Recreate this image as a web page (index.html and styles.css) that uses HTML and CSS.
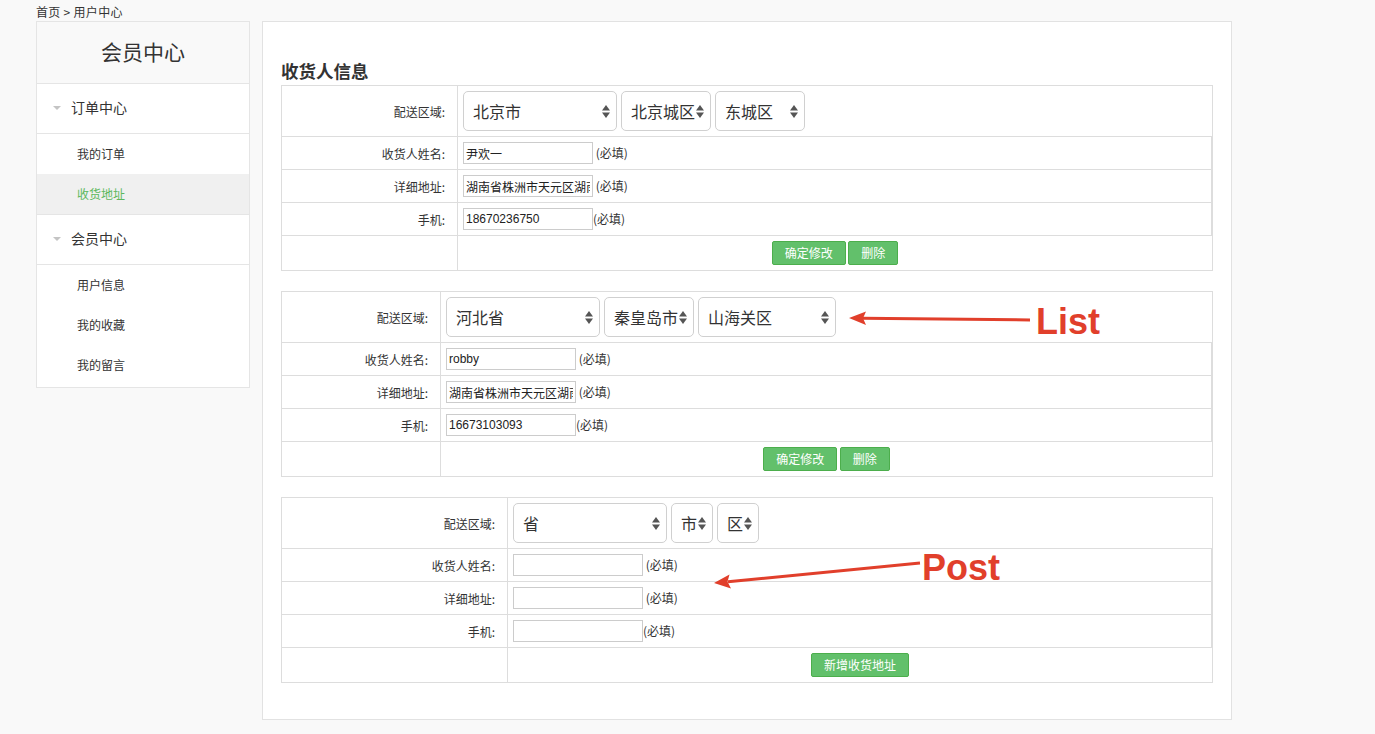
FILE: index.html
```html
<!DOCTYPE html>
<html lang="zh-CN">
<head>
<meta charset="utf-8">
<title>用户中心</title>
<link rel="stylesheet" href="styles.css">
</head>
<body>
<div class="page">
  <div class="crumb">首页 &gt; 用户中心</div>
  <div class="layout">
    <aside class="side">
      <div class="side-head">会员中心</div>
      <div class="group">
        <div class="group-title"><span class="tri"></span>订单中心</div>
        <ul class="items">
          <li>我的订单</li>
          <li class="active">收货地址</li>
        </ul>
      </div>
      <div class="group">
        <div class="group-title"><span class="tri"></span>会员中心</div>
        <ul class="items">
          <li>用户信息</li>
          <li>我的收藏</li>
          <li>我的留言</li>
        </ul>
      </div>
    </aside>

    <main class="panel">
      <h3 class="title">收货人信息</h3>

      <table class="addr t1">
        <tr class="r-region">
          <td class="lbl">配送区域:</td>
          <td class="val"><div class="sels">
            <div class="sel w154"><span>北京市</span><svg class="arr" viewBox="0 0 8 13"><polygon points="0,5.5 4,0 8,5.5"/><polygon points="0,7.5 8,7.5 4,13"/></svg></div>
            <div class="sel w90"><span>北京城区</span><svg class="arr" viewBox="0 0 8 13"><polygon points="0,5.5 4,0 8,5.5"/><polygon points="0,7.5 8,7.5 4,13"/></svg></div>
            <div class="sel w90"><span>东城区</span><svg class="arr" viewBox="0 0 8 13"><polygon points="0,5.5 4,0 8,5.5"/><polygon points="0,7.5 8,7.5 4,13"/></svg></div>
          </div></td>
        </tr>
        <tr class="mid"><td class="lbl">收货人姓名:</td><td class="val"><input class="txt" type="text" value="尹欢一"> <span class="req">(必填)</span></td></tr>
        <tr class="mid"><td class="lbl">详细地址:</td><td class="val"><input class="txt" type="text" value="湖南省株洲市天元区湖南"> <span class="req">(必填)</span></td></tr>
        <tr class="mid"><td class="lbl">手机:</td><td class="val"><input class="txt" type="text" value="18670236750"><span class="req">(必填)</span></td></tr>
        <tr class="r-btn"><td class="lbl"></td><td class="val center"><button class="btn">确定修改</button> <button class="btn">删除</button></td></tr>
      </table>

      <table class="addr t2">
        <tr class="r-region">
          <td class="lbl">配送区域:</td>
          <td class="val"><div class="sels">
            <div class="sel w154"><span>河北省</span><svg class="arr" viewBox="0 0 8 13"><polygon points="0,5.5 4,0 8,5.5"/><polygon points="0,7.5 8,7.5 4,13"/></svg></div>
            <div class="sel w90"><span>秦皇岛市</span><svg class="arr" viewBox="0 0 8 13"><polygon points="0,5.5 4,0 8,5.5"/><polygon points="0,7.5 8,7.5 4,13"/></svg></div>
            <div class="sel w138"><span>山海关区</span><svg class="arr" viewBox="0 0 8 13"><polygon points="0,5.5 4,0 8,5.5"/><polygon points="0,7.5 8,7.5 4,13"/></svg></div>
          </div></td>
        </tr>
        <tr class="mid"><td class="lbl">收货人姓名:</td><td class="val"><input class="txt" type="text" value="robby"> <span class="req">(必填)</span></td></tr>
        <tr class="mid"><td class="lbl">详细地址:</td><td class="val"><input class="txt" type="text" value="湖南省株洲市天元区湖南"> <span class="req">(必填)</span></td></tr>
        <tr class="mid"><td class="lbl">手机:</td><td class="val"><input class="txt" type="text" value="16673103093"><span class="req">(必填)</span></td></tr>
        <tr class="r-btn"><td class="lbl"></td><td class="val center"><button class="btn">确定修改</button> <button class="btn">删除</button></td></tr>
      </table>

      <table class="addr t3">
        <tr class="r-region">
          <td class="lbl">配送区域:</td>
          <td class="val"><div class="sels">
            <div class="sel w154"><span>省</span><svg class="arr" viewBox="0 0 8 13"><polygon points="0,5.5 4,0 8,5.5"/><polygon points="0,7.5 8,7.5 4,13"/></svg></div>
            <div class="sel w42"><span>市</span><svg class="arr" viewBox="0 0 8 13"><polygon points="0,5.5 4,0 8,5.5"/><polygon points="0,7.5 8,7.5 4,13"/></svg></div>
            <div class="sel w42"><span>区</span><svg class="arr" viewBox="0 0 8 13"><polygon points="0,5.5 4,0 8,5.5"/><polygon points="0,7.5 8,7.5 4,13"/></svg></div>
          </div></td>
        </tr>
        <tr class="mid"><td class="lbl">收货人姓名:</td><td class="val"><input class="txt" type="text" value=""> <span class="req">(必填)</span></td></tr>
        <tr class="mid"><td class="lbl">详细地址:</td><td class="val"><input class="txt" type="text" value=""> <span class="req">(必填)</span></td></tr>
        <tr class="mid"><td class="lbl">手机:</td><td class="val"><input class="txt" type="text" value=""><span class="req">(必填)</span></td></tr>
        <tr class="r-btn"><td class="lbl"></td><td class="val center"><button class="btn">新增收货地址</button></td></tr>
      </table>
    </main>
  </div>

  <svg class="notes" width="1375" height="734" viewBox="0 0 1375 734">
    <line x1="1030" y1="320" x2="862" y2="318.2" class="ln"/>
    <polygon points="849,318 866,311.5 863,318.2 866,325" class="hd"/>
    <text x="1036" y="334" class="note">List</text>
    <line x1="920" y1="563" x2="728" y2="581.8" class="ln"/>
    <polygon points="714,583 729.5,574.5 727.5,581.8 731,588.5" class="hd"/>
    <text x="922" y="580" class="note">Post</text>
  </svg>
</div>
</body>
</html>
```

FILE: styles.css
```css
* { box-sizing: border-box; }

html, body {
  margin: 0;
  padding: 0;
  background: #f9f9f9;
  font-family: "Noto Sans CJK SC", "Liberation Sans", sans-serif;
  color: #333;
}

.page {
  position: relative;
  width: 1375px;
  height: 734px;
  padding-left: 36px;
  overflow: hidden;
}

.crumb {
  height: 21px;
  font-size: 12px;
  line-height: 23px;
  color: #333;
  letter-spacing: 0.3px;
}

.layout {
  display: flex;
  align-items: flex-start;
  gap: 12px;
}

/* sidebar */
.side {
  width: 214px;
  background: #fff;
  border: 1px solid #e5e5e5;
  padding-bottom: 2px;
}

.side-head {
  height: 62px;
  border-bottom: 1px solid #e5e5e5;
  background: #f9f9f9;
  font-size: 21px;
  line-height: 58px;
  text-align: center;
  color: #333;
}

.group + .group { border-top: 1px solid #e5e5e5; }

.group-title {
  height: 50px;
  border-bottom: 1px solid #e5e5e5;
  display: flex;
  align-items: center;
  padding-left: 16px;
  padding-bottom: 3px;
  font-size: 14px;
  color: #333;
}

.tri {
  width: 0;
  height: 0;
  border-left: 4px solid transparent;
  border-right: 4px solid transparent;
  border-top: 4px solid #c4c4c4;
  margin-right: 10px;
  margin-top: 1px;
}

.items {
  list-style: none;
  margin: 0;
  padding: 0;
}

.items li {
  height: 40px;
  line-height: 40px;
  padding-left: 40px;
  font-size: 12px;
  color: #333;
}

.items li.active {
  background: #f0f0f0;
  color: #5cb85c;
}

/* main panel */
.panel {
  width: 970px;
  height: 699px;
  background: #fff;
  border: 1px solid #e2e2e2;
  padding: 37px 18px 0 18px;
}

.title {
  margin: 0 0 2px 0;
  height: 24px;
  font-size: 17.5px;
  line-height: 24px;
  font-weight: bold;
  color: #333;
}

.addr {
  width: 932px;
  border-collapse: collapse;
  margin-bottom: 20px;
  font-size: 12px;
}

.addr td {
  border: 1px solid #ddd;
  padding: 0;
}

.t1 .lbl { width: 176px; }
.t2 .lbl { width: 159px; }
.t3 .lbl { width: 226px; }

.lbl {
  text-align: right;
  padding-right: 12px !important;
  color: #333;
  white-space: nowrap;
}

.val {
  padding: 5px 5px !important;
  white-space: nowrap;
}

.mid td { height: 33px; }
.mid .val { box-shadow: inset -1px 0 0 #ddd; padding-right: 2px !important; }
.r-region td { height: 51px; }
.r-btn td { height: 35px; }

.center { text-align: center; }

.req {
  display: inline-block;
  vertical-align: middle;
  line-height: 22px;
  color: #333;
}

.sels {
  display: flex;
  gap: 4px;
}

.sel {
  height: 40px;
  border: 1px solid #d0d0d0;
  border-radius: 5px;
  background: #fff;
  display: flex;
  align-items: center;
  justify-content: space-between;
  padding: 0 6px 0 9px;
  font-size: 16px;
  color: #333;
}

.w154 { width: 154px; }
.w90 { width: 90px; }
.w138 { width: 138px; }
.w42 { width: 42px; }

.arr {
  width: 8px;
  height: 13px;
  fill: #555;
  flex: none;
}

.txt {
  width: 130px;
  height: 22px;
  border: 1px solid #ccc;
  padding: 0 2px;
  margin: 0;
  font-family: "Liberation Sans", "Noto Sans CJK SC", sans-serif;
  font-size: 12px;
  color: #222;
  vertical-align: middle;
  background: #fff;
  outline: none;
}

.btn {
  height: 24px;
  padding: 0 12px;
  margin: 0;
  border: 1px solid #4cae4c;
  border-radius: 2px;
  background: #62c06b;
  color: #fff;
  font-family: "Noto Sans CJK SC", sans-serif;
  font-size: 12px;
  line-height: 22px;
  vertical-align: middle;
}

/* annotations */
.notes {
  position: absolute;
  top: 0;
  left: 0;
  pointer-events: none;
}

.ln {
  stroke: #e13f2b;
  stroke-width: 3;
}

.hd { fill: #e13f2b; }

.note {
  font-family: "Liberation Sans", sans-serif;
  font-weight: bold;
  font-size: 36px;
  fill: #e13f2b;
}
```
